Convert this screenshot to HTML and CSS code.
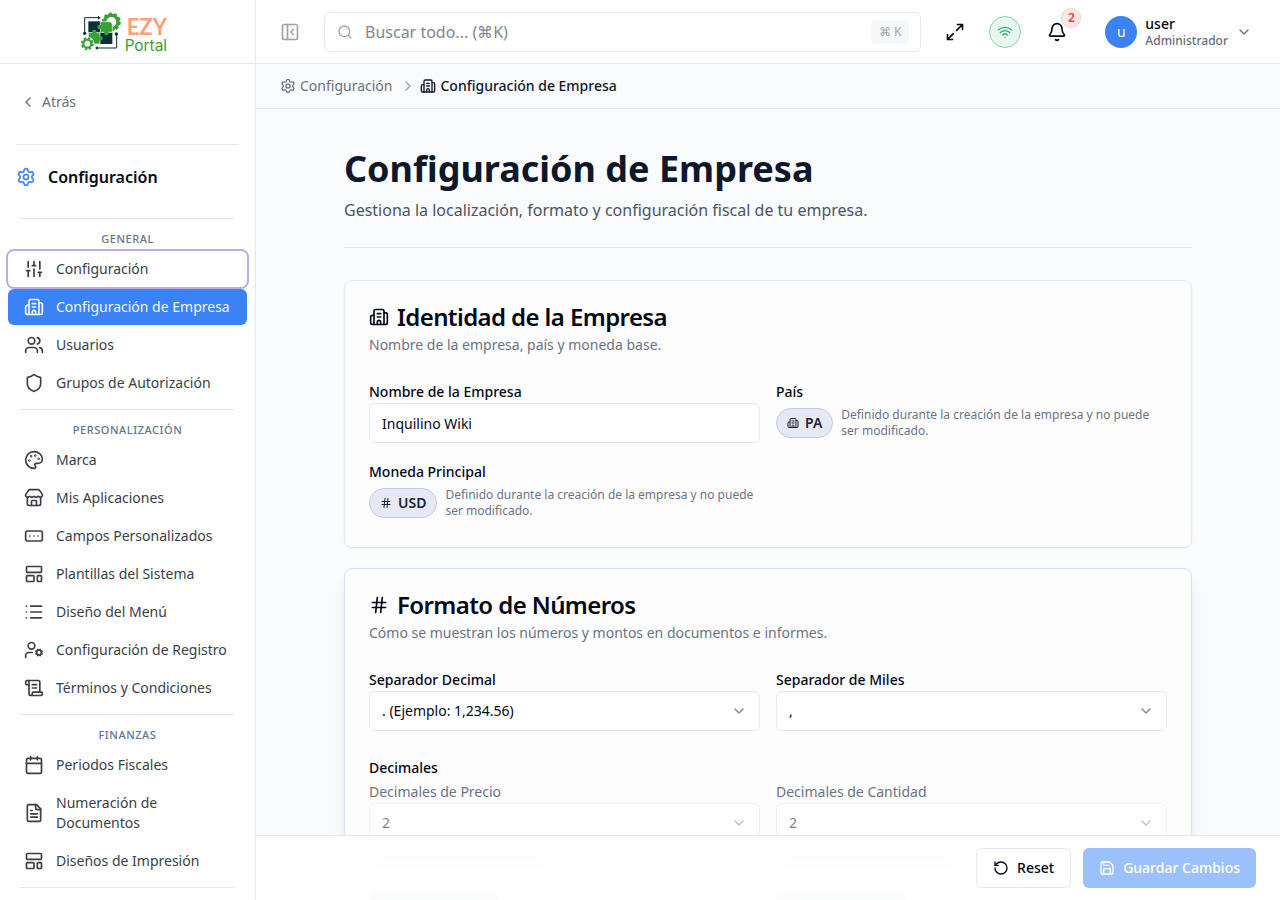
FILE: index.html
```html
<!DOCTYPE html>
<html lang="es">
<head>
    <meta charset="UTF-8">
    <meta name="viewport" content="width=device-width, initial-scale=1.0">
    <title>Configuración de Empresa - EZY Portal</title>
    <link rel="stylesheet" href="styles.css">
</head>
<body>
    <!-- Icon sprite -->
    <svg class="sprite" aria-hidden="true">
        <symbol id="i-settings" viewBox="0 0 24 24"><path d="M9.671 4.136a2.34 2.34 0 0 1 4.659 0 2.34 2.34 0 0 0 3.319 1.915 2.34 2.34 0 0 1 2.33 4.033 2.34 2.34 0 0 0 0 3.831 2.34 2.34 0 0 1-2.33 4.033 2.34 2.34 0 0 0-3.319 1.915 2.34 2.34 0 0 1-4.659 0 2.34 2.34 0 0 0-3.32-1.915 2.34 2.34 0 0 1-2.33-4.033 2.34 2.34 0 0 0 0-3.831A2.34 2.34 0 0 1 6.35 6.051a2.34 2.34 0 0 0 3.319-1.915"/><circle cx="12" cy="12" r="3"/></symbol>
        <symbol id="i-sliders" viewBox="0 0 24 24"><path d="M10 8h4M12 21v-9M12 8V3M17 16h4M19 12V3M19 21v-5M3 14h4M5 10V3M5 21v-7"/></symbol>
        <symbol id="i-building" viewBox="0 0 24 24"><path d="M10 12h4M10 8h4M14 21v-3a2 2 0 0 0-4 0v3M6 10H4a2 2 0 0 0-2 2v7a2 2 0 0 0 2 2h16a2 2 0 0 0 2-2V9a2 2 0 0 0-2-2h-2"/><path d="M6 21V5a2 2 0 0 1 2-2h8a2 2 0 0 1 2 2v16"/></symbol>
        <symbol id="i-users" viewBox="0 0 24 24"><path d="M16 21v-2a4 4 0 0 0-4-4H6a4 4 0 0 0-4 4v2M16 3.128a4 4 0 0 1 0 7.744M22 21v-2a4 4 0 0 0-3-3.87"/><circle cx="9" cy="7" r="4"/></symbol>
        <symbol id="i-shield" viewBox="0 0 24 24"><path d="M20 13c0 5-3.5 7.5-7.66 8.95a1 1 0 0 1-.67-.01C7.5 20.5 4 18 4 13V6a1 1 0 0 1 1-1c2 0 4.5-1.2 6.24-2.72a1.17 1.17 0 0 1 1.52 0C14.51 3.81 17 5 19 5a1 1 0 0 1 1 1z"/></symbol>
        <symbol id="i-palette" viewBox="0 0 24 24"><path d="M12 22a1 1 0 0 1 0-20 10 9 0 0 1 10 9 5 5 0 0 1-5 5h-2.25a1.75 1.75 0 0 0-1.4 2.8l.3.4a1.75 1.75 0 0 1-1.4 2.8z"/><circle cx="13.5" cy="6.5" r=".5"/><circle cx="17.5" cy="10.5" r=".5"/><circle cx="6.5" cy="12.5" r=".5"/><circle cx="8.5" cy="7.5" r=".5"/></symbol>
        <symbol id="i-store" viewBox="0 0 24 24"><path d="M15 21v-5a1 1 0 0 0-1-1h-4a1 1 0 0 0-1 1v5"/><path d="M17.774 10.31a1.12 1.12 0 0 0-1.549 0 2.5 2.5 0 0 1-3.451 0 1.12 1.12 0 0 0-1.548 0 2.5 2.5 0 0 1-3.452 0 1.12 1.12 0 0 0-1.549 0 2.5 2.5 0 0 1-3.77-3.248l2.889-4.184A2 2 0 0 1 7 2h10a2 2 0 0 1 1.653.873l2.895 4.192a2.5 2.5 0 0 1-3.774 3.244"/><path d="M4 10.95V19a2 2 0 0 0 2 2h12a2 2 0 0 0 2-2v-8.05"/></symbol>
        <symbol id="i-fields" viewBox="0 0 24 24"><rect width="20" height="12" x="2" y="6" rx="2"/><path d="M12 12h.01M17 12h.01M7 12h.01"/></symbol>
        <symbol id="i-template" viewBox="0 0 24 24"><rect width="18" height="7" x="3" y="3" rx="1"/><rect width="9" height="7" x="3" y="14" rx="1"/><rect width="5" height="7" x="16" y="14" rx="1"/></symbol>
        <symbol id="i-list" viewBox="0 0 24 24"><path d="M3 5h.01M3 12h.01M3 19h.01M8 5h13M8 12h13M8 19h13"/></symbol>
        <symbol id="i-user-cog" viewBox="0 0 24 24"><path d="M10 15H6a4 4 0 0 0-4 4v2M14.305 16.53l.923-.382M15.228 13.852l-.923-.383M16.852 12.228l-.383-.923M16.852 17.772l-.383.924M19.148 12.228l.383-.923M19.53 18.696l-.382-.924M20.772 13.852l.924-.383M20.772 16.148l.924.383"/><circle cx="18" cy="15" r="3"/><circle cx="9" cy="7" r="4"/></symbol>
        <symbol id="i-scroll" viewBox="0 0 24 24"><path d="M15 12h-5M15 8h-5M19 17V5a2 2 0 0 0-2-2H4"/><path d="M8 21h12a2 2 0 0 0 2-2v-1a1 1 0 0 0-1-1H11a1 1 0 0 0-1 1v1a2 2 0 1 1-4 0V5a2 2 0 1 0-4 0v2a1 1 0 0 0 1 1h3"/></symbol>
        <symbol id="i-calendar" viewBox="0 0 24 24"><path d="M8 2v4M16 2v4M3 10h18"/><rect width="18" height="18" x="3" y="4" rx="2"/></symbol>
        <symbol id="i-file" viewBox="0 0 24 24"><path d="M15 2H6a2 2 0 0 0-2 2v16a2 2 0 0 0 2 2h12a2 2 0 0 0 2-2V7Z"/><path d="M14 2v4a2 2 0 0 0 2 2h4M10 9H8M16 13H8M16 17H8"/></symbol>
        <symbol id="i-panel" viewBox="0 0 24 24"><rect width="18" height="18" x="3" y="3" rx="2"/><path d="M9 3v18M16 15l-3-3 3-3"/></symbol>
        <symbol id="i-search" viewBox="0 0 24 24"><circle cx="11" cy="11" r="8"/><path d="m21 21-4.34-4.34"/></symbol>
        <symbol id="i-maximize" viewBox="0 0 24 24"><path d="M15 3h6v6M21 3l-7 7M3 21l7-7M9 21H3v-6"/></symbol>
        <symbol id="i-wifi" viewBox="0 0 24 24"><path d="M12 20h.01M2 8.82a15 15 0 0 1 20 0M5 12.859a10 10 0 0 1 14 0M8.5 16.429a5 5 0 0 1 7 0"/></symbol>
        <symbol id="i-bell" viewBox="0 0 24 24"><path d="M10.268 21a2 2 0 0 0 3.464 0M3.262 15.326A1 1 0 0 0 4 17h16a1 1 0 0 0 .74-1.673C19.41 13.956 18 12.499 18 8A6 6 0 0 0 6 8c0 4.499-1.411 5.956-2.738 7.326"/></symbol>
        <symbol id="i-down" viewBox="0 0 24 24"><path d="m6 9 6 6 6-6"/></symbol>
        <symbol id="i-left" viewBox="0 0 24 24"><path d="m15 18-6-6 6-6"/></symbol>
        <symbol id="i-right" viewBox="0 0 24 24"><path d="m9 18 6-6-6-6"/></symbol>
        <symbol id="i-hash" viewBox="0 0 24 24"><path d="M4 9h16M4 15h16M10 3 8 21M16 3l-2 18"/></symbol>
        <symbol id="i-reset" viewBox="0 0 24 24"><path d="M3 12a9 9 0 1 0 9-9 9.75 9.75 0 0 0-6.74 2.74L3 8"/><path d="M3 3v5h5"/></symbol>
        <symbol id="i-save" viewBox="0 0 24 24"><path d="M15.2 3a2 2 0 0 1 1.4.6l3.8 3.8a2 2 0 0 1 .6 1.4V19a2 2 0 0 1-2 2H5a2 2 0 0 1-2-2V5a2 2 0 0 1 2-2z"/><path d="M17 21v-7a1 1 0 0 0-1-1H8a1 1 0 0 0-1 1v7M7 3v4a1 1 0 0 0 1 1h7"/></symbol>
    </svg>

    <div class="app">
        <aside class="sidebar">
            <a href="#" class="brand">
                <svg class="logo" viewBox="0 0 264 120" role="img" aria-label="EZY Portal">
                    <circle cx="91" cy="30" r="20" fill="#fff" stroke="#37a135" stroke-width="10"/>
                    <circle cx="91" cy="30" r="25" fill="none" stroke="#37a135" stroke-width="7" stroke-dasharray="9 6.7"/>
                    <path d="M22 28h37v34H22z" fill="#0b2f3a"/>
                    <path d="M57 61h37v35H57z" fill="#0b2f3a"/>
                    <path d="M58 29h26c6 0 10 4 10 10v22H58z" fill="#37a135" stroke="#fff" stroke-width="2"/>
                    <path d="M22 62h35v34H32c-6 0-10-4-10-10z" fill="#37a135" stroke="#fff" stroke-width="2"/>
                    <circle cx="56" cy="45" r="7" fill="#37a135"/>
                    <circle cx="76" cy="63" r="7" fill="#37a135"/>
                    <circle cx="40" cy="60" r="7" fill="#37a135"/>
                    <circle cx="58" cy="79" r="7" fill="#37a135"/>
                    <circle cx="19" cy="95" r="21" fill="#fff"/>
                    <circle cx="19" cy="95" r="12" fill="#fff" stroke="#37a135" stroke-width="7"/>
                    <circle cx="19" cy="95" r="17" fill="none" stroke="#37a135" stroke-width="5" stroke-dasharray="7.5 5.8"/>
                    <path d="M11 61V17h43M107 67v41H48" fill="none" stroke="#0b2f3a" stroke-width="3"/>
                    <path d="m51 11 8 6-8 6zM50 102l-8 6 8 6z" fill="#0b2f3a"/>
                    <circle cx="11" cy="64" r="5" fill="#0b2f3a"/>
                    <circle cx="106" cy="66" r="5" fill="#0b2f3a"/>
                    <text x="137" y="70" class="logo-ezy">EZY</text>
                    <text x="131" y="116" class="logo-portal">Portal</text>
                </svg>
            </a>
            <div class="side-top">
                <a href="#" class="back"><svg class="icon s16"><use href="#i-left"/></svg>Atrás</a>
            </div>
            <div class="side-title"><svg class="icon s20"><use href="#i-settings"/></svg>Configuración</div>

            <nav class="nav">
                <section class="nav-group">
                    <h2>General</h2>
                    <a href="#" class="nav-item focused"><svg class="icon s20"><use href="#i-sliders"/></svg>Configuración</a>
                    <a href="#" class="nav-item active"><svg class="icon s20"><use href="#i-building"/></svg>Configuración de Empresa</a>
                    <a href="#" class="nav-item"><svg class="icon s20"><use href="#i-users"/></svg>Usuarios</a>
                    <a href="#" class="nav-item"><svg class="icon s20"><use href="#i-shield"/></svg>Grupos de Autorización</a>
                </section>
                <section class="nav-group">
                    <h2>Personalización</h2>
                    <a href="#" class="nav-item"><svg class="icon s20"><use href="#i-palette"/></svg>Marca</a>
                    <a href="#" class="nav-item"><svg class="icon s20"><use href="#i-store"/></svg>Mis Aplicaciones</a>
                    <a href="#" class="nav-item"><svg class="icon s20"><use href="#i-fields"/></svg>Campos Personalizados</a>
                    <a href="#" class="nav-item"><svg class="icon s20"><use href="#i-template"/></svg>Plantillas del Sistema</a>
                    <a href="#" class="nav-item"><svg class="icon s20"><use href="#i-list"/></svg>Diseño del Menú</a>
                    <a href="#" class="nav-item"><svg class="icon s20"><use href="#i-user-cog"/></svg>Configuración de Registro</a>
                    <a href="#" class="nav-item"><svg class="icon s20"><use href="#i-scroll"/></svg>Términos y Condiciones</a>
                </section>
                <section class="nav-group last">
                    <h2>Finanzas</h2>
                    <a href="#" class="nav-item"><svg class="icon s20"><use href="#i-calendar"/></svg>Periodos Fiscales</a>
                    <a href="#" class="nav-item"><svg class="icon s20"><use href="#i-file"/></svg>Numeración de Documentos</a>
                    <a href="#" class="nav-item"><svg class="icon s20"><use href="#i-template"/></svg>Diseños de Impresión</a>
                </section>
            </nav>
        </aside>

        <div class="page">
            <header class="topbar">
                <button class="icon-btn muted" aria-label="Contraer menú"><svg class="icon s20"><use href="#i-panel"/></svg></button>
                <label class="search">
                    <svg class="icon s16"><use href="#i-search"/></svg>
                    <input type="search" placeholder="Buscar todo... (⌘K)" aria-label="Buscar todo">
                    <kbd>⌘ K</kbd>
                </label>
                <div class="actions">
                    <button class="icon-btn" aria-label="Pantalla completa"><svg class="icon s20"><use href="#i-maximize"/></svg></button>
                    <button class="status" aria-label="Conectado"><svg class="icon s16"><use href="#i-wifi"/></svg></button>
                    <button class="bell" aria-label="Notificaciones"><svg class="icon s20"><use href="#i-bell"/></svg><span class="count">2</span></button>
                    <button class="user">
                        <span class="avatar">u</span>
                        <span class="user-text"><span class="user-name">user</span><span class="user-role">Administrador</span></span>
                        <svg class="icon s16"><use href="#i-down"/></svg>
                    </button>
                </div>
            </header>

            <nav class="breadcrumb" aria-label="Ruta">
                <a href="#"><svg class="icon s16"><use href="#i-settings"/></svg>Configuración</a>
                <svg class="icon s16 sep"><use href="#i-right"/></svg>
                <span class="current"><svg class="icon s16"><use href="#i-building"/></svg>Configuración de Empresa</span>
            </nav>

            <main class="main">
                <div class="content">
                    <div class="page-head">
                        <h1>Configuración de Empresa</h1>
                        <p>Gestiona la localización, formato y configuración fiscal de tu empresa.</p>
                    </div>

                    <section class="card">
                        <h2 class="card-title"><svg class="icon s20"><use href="#i-building"/></svg>Identidad de la Empresa</h2>
                        <p class="card-desc">Nombre de la empresa, país y moneda base.</p>
                        <div class="fields">
                            <div class="field">
                                <label for="company">Nombre de la Empresa</label>
                                <input type="text" id="company" class="control" value="Inquilino Wiki">
                            </div>
                            <div class="field">
                                <span class="label">País</span>
                                <div class="locked">
                                    <span class="badge"><svg class="icon s12"><use href="#i-building"/></svg>PA</span>
                                    <p>Definido durante la creación de la empresa y no puede ser modificado.</p>
                                </div>
                            </div>
                            <div class="field">
                                <span class="label">Moneda Principal</span>
                                <div class="locked">
                                    <span class="badge"><svg class="icon s12"><use href="#i-hash"/></svg>USD</span>
                                    <p>Definido durante la creación de la empresa y no puede ser modificado.</p>
                                </div>
                            </div>
                        </div>
                    </section>

                    <section class="card raised">
                        <h2 class="card-title"><svg class="icon s20"><use href="#i-hash"/></svg>Formato de Números</h2>
                        <p class="card-desc">Cómo se muestran los números y montos en documentos e informes.</p>
                        <div class="fields">
                            <div class="field">
                                <label for="decimal">Separador Decimal</label>
                                <div class="select">
                                    <select id="decimal" class="control"><option>. (Ejemplo: 1,234.56)</option></select>
                                    <svg class="icon s16"><use href="#i-down"/></svg>
                                </div>
                            </div>
                            <div class="field">
                                <label for="thousands">Separador de Miles</label>
                                <div class="select">
                                    <select id="thousands" class="control"><option>,</option></select>
                                    <svg class="icon s16"><use href="#i-down"/></svg>
                                </div>
                            </div>
                        </div>
                        <h3 class="sub-title">Decimales</h3>
                        <div class="fields">
                            <div class="field">
                                <label for="price" class="soft">Decimales de Precio</label>
                                <div class="select disabled">
                                    <select id="price" class="control" disabled><option>2</option></select>
                                    <svg class="icon s16"><use href="#i-down"/></svg>
                                </div>
                                <div class="hint-line"></div>
                                <div class="hint-line short"></div>
                            </div>
                            <div class="field">
                                <label for="quantity" class="soft">Decimales de Cantidad</label>
                                <div class="select disabled">
                                    <select id="quantity" class="control" disabled><option>2</option></select>
                                    <svg class="icon s16"><use href="#i-down"/></svg>
                                </div>
                                <div class="hint-line"></div>
                                <div class="hint-line short"></div>
                            </div>
                        </div>
                    </section>
                </div>

                <footer class="save-bar">
                    <button class="btn outline"><svg class="icon s16"><use href="#i-reset"/></svg>Reset</button>
                    <button class="btn primary" disabled><svg class="icon s16"><use href="#i-save"/></svg>Guardar Cambios</button>
                </footer>
            </main>
        </div>
    </div>
</body>
</html>
```
FILE: styles.css
```css
* {
    margin: 0;
    padding: 0;
    box-sizing: border-box;
}

body {
    font-family: 'Noto Sans', sans-serif;
    font-size: 14px;
    line-height: 20px;
    color: #020817;
    background: #f9fbfd;
}

a {
    color: inherit;
    text-decoration: none;
}

button,
input,
select {
    font: inherit;
    color: inherit;
}

button {
    background: none;
    border: none;
    cursor: pointer;
}

.sprite {
    display: none;
}

.icon {
    flex: none;
    fill: none;
    stroke: currentColor;
    stroke-width: 2;
    stroke-linecap: round;
    stroke-linejoin: round;
}

.s12 { width: 12px; height: 12px; }
.s16 { width: 16px; height: 16px; }
.s20 { width: 20px; height: 20px; }

.app {
    display: grid;
    grid-template-columns: 256px minmax(0, 1fr);
    height: 100vh;
}

/* Sidebar */
.sidebar {
    background: #fefefe;
    border-right: 1px solid #e2e8f0;
    overflow: hidden;
}

.brand {
    display: flex;
    align-items: center;
    justify-content: center;
    height: 64px;
    padding-right: 6px;
    border-bottom: 1px solid #e2e8f0;
}

.logo {
    width: 88px;
    height: 40px;
    overflow: visible;
}

.logo-ezy {
    font: 700 66px Lato, sans-serif;
    fill: #f9a273;
}

.logo-portal {
    font: 400 46px Inter, sans-serif;
    fill: #37a135;
}

.side-top {
    margin: 0 16px;
    padding: 20px 0 24px;
    border-bottom: 1px solid #e2e8f0;
}

.back {
    display: flex;
    align-items: center;
    gap: 6px;
    padding: 8px 4px;
    color: #6b7280;
}

.side-title {
    display: flex;
    align-items: center;
    gap: 12px;
    padding: 20px 16px 29px;
    font-size: 16px;
    line-height: 24px;
    font-weight: 600;
}

.side-title .icon {
    color: #3b82f6;
}

.nav {
    padding: 0 8px;
}

.nav-group {
    display: flex;
    flex-direction: column;
    gap: 2px;
}

.nav-group::before {
    content: '';
    height: 1px;
    margin: 0 12px -2px;
    background: #e2e8f0;
}

.nav-group + .nav-group {
    margin-top: 8px;
}

.nav-group.last::after {
    content: '';
    height: 1px;
    margin: 6px 12px 0;
    background: #e2e8f0;
}

.nav-group h2 {
    padding-top: 12px;
    padding-bottom: 2px;
    font-size: 11px;
    line-height: 16px;
    font-weight: 500;
    letter-spacing: 0.05em;
    text-align: center;
    text-transform: uppercase;
    color: #64748b;
}

.nav-item {
    display: flex;
    align-items: center;
    gap: 12px;
    padding: 8px 16px;
    border-radius: 6px;
    color: #3c3f46;
}

.nav-item.focused {
    box-shadow: 0 0 0 2px #b7b0e8;
}

.nav-item.active {
    background: #3b82f6;
    color: #f1f6ff;
}

/* Top bar */
.page {
    display: flex;
    flex-direction: column;
    min-width: 0;
    min-height: 0;
}

.topbar {
    display: flex;
    align-items: center;
    gap: 16px;
    flex: none;
    height: 64px;
    padding: 0 16px;
    background: #fefefe;
    border-bottom: 1px solid #e2e8f0;
}

.icon-btn {
    display: grid;
    place-items: center;
    width: 36px;
    height: 36px;
}

.icon-btn.muted {
    color: #9ca3af;
}

.search {
    display: flex;
    align-items: center;
    flex: 1;
    gap: 12px;
    height: 40px;
    padding: 0 11px 0 12px;
    background: #fff;
    border: 1px solid #e2e8f0;
    border-radius: 6px;
    color: #9ca3af;
}

.search input {
    flex: 1;
    min-width: 0;
    border: none;
    outline: none;
    background: none;
    font-size: 16px;
    line-height: 24px;
}

.search input::placeholder {
    color: #84878d;
}

.search kbd {
    padding: 4px 8px;
    border-radius: 4px;
    background: #f5f7f9;
    font: inherit;
    font-size: 12px;
    line-height: 16px;
}

.actions {
    display: flex;
    align-items: center;
    gap: 16px;
}

.status {
    display: grid;
    place-items: center;
    width: 32px;
    height: 32px;
    border: 1px solid #86d6b0;
    border-radius: 50%;
    background: #e7f7ef;
    color: #2fae74;
}

.bell {
    display: grid;
    place-items: center;
    position: relative;
    width: 40px;
    height: 40px;
}

.count {
    position: absolute;
    top: -4px;
    right: -4px;
    width: 20px;
    height: 20px;
    border: 1px solid #fbcaca;
    border-radius: 50%;
    background: #fde8e8;
    color: #e53e3e;
    font-size: 12px;
    line-height: 18px;
    font-weight: 600;
}

.user {
    display: flex;
    align-items: center;
    gap: 8px;
    padding: 0 12px;
    text-align: left;
    color: #6b6e75;
}

.avatar {
    width: 32px;
    height: 32px;
    border-radius: 50%;
    background: #3b82f6;
    color: #fff;
    line-height: 32px;
    text-align: center;
}

.user-text {
    display: flex;
    flex-direction: column;
}

.user-name {
    line-height: 18px;
    font-weight: 500;
    color: #020817;
}

.user-role {
    font-size: 12px;
    line-height: 16px;
    font-weight: 500;
}

.breadcrumb {
    display: flex;
    align-items: center;
    gap: 4px;
    flex: none;
    height: 45px;
    padding: 0 24px;
    border-bottom: 1px solid #e2e8f0;
    color: #6b7280;
}

.breadcrumb a,
.breadcrumb .current {
    display: flex;
    align-items: center;
    gap: 4px;
}

.breadcrumb a {
    padding-right: 4px;
}

.breadcrumb .sep {
    color: #9ca3af;
}

.breadcrumb .current {
    font-weight: 500;
    color: #0f172a;
}

/* Content */
.main {
    flex: 1;
    min-height: 0;
    overflow-y: auto;
    scrollbar-width: none;
}

.content {
    display: flex;
    flex-direction: column;
    gap: 20px;
    max-width: 896px;
    margin: 0 auto;
    padding: 40px 24px 24px;
}

.page-head {
    margin-bottom: 12px;
    padding-bottom: 25px;
    border-bottom: 1px solid #e2e8f0;
}

h1 {
    margin-bottom: 9px;
    font-size: 36px;
    line-height: 40px;
    font-weight: 700;
    color: #0f172a;
}

.page-head p {
    font-size: 16px;
    line-height: 24px;
    color: #4b5563;
}

.card {
    padding: 24px;
    background: #fdfdfe;
    border: 1px solid #e2e8f0;
    border-radius: 8px;
    box-shadow: 0 1px 2px rgba(0, 0, 0, 0.05);
}

.card.raised {
    border-color: #d5e0f3;
    box-shadow: 0 10px 15px -3px rgba(59, 100, 180, 0.1), 0 4px 6px -4px rgba(59, 100, 180, 0.1);
}

.card-title {
    display: flex;
    align-items: center;
    gap: 8px;
    margin-bottom: 6px;
    font-size: 24px;
    line-height: 24px;
    font-weight: 600;
    letter-spacing: -0.025em;
}

.card-desc {
    margin-bottom: 24px;
    color: #6b7385;
}

.fields {
    display: grid;
    grid-template-columns: repeat(2, minmax(0, 1fr));
    gap: 16px;
}

.field label,
.field .label,
.sub-title {
    display: block;
    padding-top: 2px;
    font-size: 14px;
    line-height: 22px;
    font-weight: 500;
}

.field label.soft {
    font-weight: 400;
    color: #6b7385;
}

.sub-title {
    margin-top: 24px;
}

.control {
    width: 100%;
    height: 40px;
    padding: 0 12px;
    background: #fff;
    border: 1px solid #e2e8f0;
    border-radius: 6px;
}

.select {
    display: grid;
    align-items: center;
}

.select > * {
    grid-area: 1 / 1;
}

.select select {
    appearance: none;
}

.select .icon {
    justify-self: end;
    margin-right: 13px;
    color: #808389;
    pointer-events: none;
}

.select.disabled {
    opacity: 0.5;
}

.select select:disabled {
    opacity: 1;
    color: #020817;
}

.hint-line {
    width: 182px;
    height: 10px;
    margin: 10px 0 28px;
    background: #a9b1bd;
}

.hint-line.short {
    width: 130px;
    margin: 0;
}

.locked {
    display: flex;
    align-items: center;
    gap: 8px;
    padding: 4px 0;
}

.locked p {
    font-size: 12px;
    line-height: 16px;
    color: #6b7385;
}

.badge {
    display: inline-flex;
    align-items: center;
    gap: 6px;
    padding: 4px 10px;
    border: 1px solid #c5c6e8;
    border-radius: 16px;
    background: #e6e9f4;
    font-weight: 600;
    color: #1c2233;
}

/* Bottom bar */
.save-bar {
    position: sticky;
    bottom: 0;
    display: flex;
    justify-content: flex-end;
    gap: 12px;
    padding: 12px 24px;
    background: rgba(255, 255, 255, 0.95);
    border-top: 1px solid #e2e8f0;
    backdrop-filter: blur(8px);
}

.btn {
    display: flex;
    align-items: center;
    gap: 8px;
    height: 40px;
    padding: 0 16px;
    border-radius: 6px;
    font-weight: 500;
}

.btn.outline {
    background: #fff;
    border: 1px solid #e2e8f0;
}

.btn.primary {
    background: #3b82f6;
    color: #fff;
    opacity: 0.5;
}
```
